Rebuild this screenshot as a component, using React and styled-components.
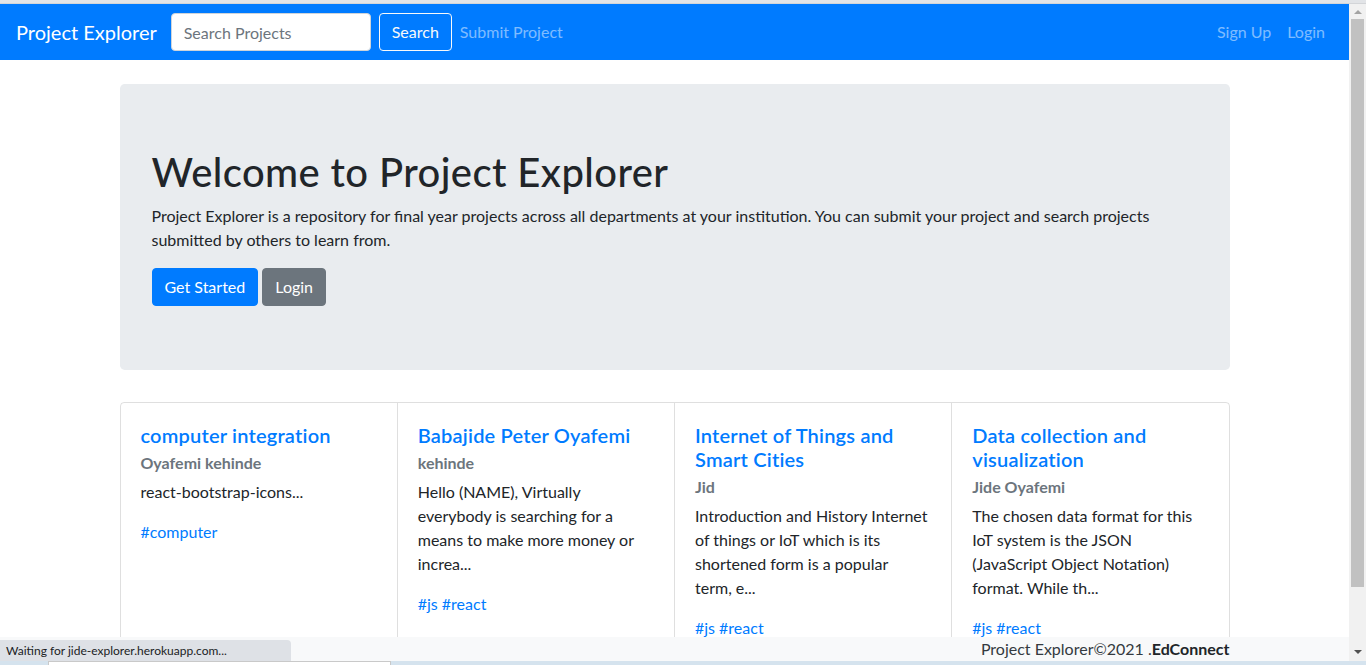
import React from "react";
import styled, { createGlobalStyle } from "styled-components";

const projects = [
  {
    title: "computer integration",
    author: "Oyafemi kehinde",
    abstract: "react-bootstrap-icons...",
    tags: ["computer"]
  },
  {
    title: "Babajide Peter Oyafemi",
    author: "kehinde",
    abstract:
      "Hello (NAME), Virtually everybody is searching for a means to make more money or increa...",
    tags: ["js", "react"]
  },
  {
    title: "Internet of Things and Smart Cities",
    author: "Jid",
    abstract:
      "Introduction and History Internet of things or IoT which is its shortened form is a popular term,\u00a0e...",
    tags: ["js", "react"]
  },
  {
    title: "Data collection and visualization",
    author: "Jide Oyafemi",
    abstract:
      "The chosen data format for this IoT system is the JSON (JavaScript Object Notation) format. While th...",
    tags: ["js", "react"]
  }
];

const App = () => (
  <>
    <GlobalStyle />
    <Frame>
      <TopStrip />
      <Middle>
        <Viewport>
          <Navbar>
            <Brand href="#">Project Explorer</Brand>
            <SearchForm>
              <SearchInput placeholder="Search Projects" />
              <OutlineButton type="button">Search</OutlineButton>
            </SearchForm>
            <NavLink href="#">Submit Project</NavLink>
            <NavRight>
              <NavLink href="#">Sign Up</NavLink>
              <NavLink href="#">Login</NavLink>
            </NavRight>
          </Navbar>

          <Container>
            <Jumbotron>
              <Heading>Welcome to Project Explorer</Heading>
              <Lead>
                Project Explorer is a repository for final year projects across
                all departments at your institution. You can submit your project
                and search projects submitted by others to learn from.
              </Lead>
              <ButtonRow>
                <Button variant="primary">Get Started</Button>
                <Button variant="secondary">Login</Button>
              </ButtonRow>
            </Jumbotron>

            <CardGroup>
              {projects.map(p => (
                <Card key={p.title}>
                  <CardTitle href="#">{p.title}</CardTitle>
                  <CardSubtitle>{p.author}</CardSubtitle>
                  <CardText>{p.abstract}</CardText>
                  <Tags>
                    {p.tags.map(t => (
                      <Tag key={t} href="#">#{t}</Tag>
                    ))}
                  </Tags>
                </Card>
              ))}
            </CardGroup>
          </Container>

          <Footer>
            <FooterInner>
              Project Explorer©2021 .<b>EdConnect</b>
            </FooterInner>
          </Footer>
          <StatusBar>Waiting for jide-explorer.herokuapp.com...</StatusBar>
        </Viewport>
        <Scrollbar>
          <ArrowUp />
          <Thumb />
          <ArrowDown />
        </Scrollbar>
      </Middle>
      <BottomStrip>
        <TaskSlot />
      </BottomStrip>
    </Frame>
  </>
);

export default App;

const GlobalStyle = createGlobalStyle`
  html, body {
    margin: 0;
    height: 100%;
    overflow: hidden;
  }
  body {
    font-family: Lato, "Liberation Sans", sans-serif;
    font-size: 16px;
    line-height: 1.5;
    color: #212529;
  }
  * { box-sizing: border-box; }
`;

const Frame = styled.div`
  display: flex;
  flex-direction: column;
  height: 100vh;
`;

const TopStrip = styled.div`
  height: 4px;
  background: #e2e4e7;
  border-bottom: 1px solid #d3d5d8;
`;

const Middle = styled.div`
  flex: 1;
  display: flex;
  min-height: 0;
`;

const Viewport = styled.div`
  flex: 1;
  position: relative;
  overflow: hidden;
  background: #fff;
`;

const Navbar = styled.nav`
  display: flex;
  align-items: center;
  height: 56px;
  padding: 8px 16px;
  background: #007bff;
`;

const Brand = styled.a`
  font-size: 20px;
  line-height: 30px;
  color: #fff;
  text-decoration: none;
  margin-right: 14px;
  white-space: nowrap;
`;

const SearchForm = styled.form`
  display: flex;
  align-items: center;
  margin: 0;
`;

const SearchInput = styled.input`
  width: 200px;
  height: 38px;
  padding: 6px 12px;
  margin-right: 8px;
  font: inherit;
  color: #495057;
  background: #fff;
  border: 1px solid #ced4da;
  border-radius: 4px;
  &::placeholder {
    color: #6c757d;
  }
`;

const OutlineButton = styled.button`
  height: 38px;
  padding: 6px 12px;
  font: inherit;
  color: #f8f9fa;
  background: transparent;
  border: 1px solid #f8f9fa;
  border-radius: 4px;
`;

const NavLink = styled.a`
  padding: 8px;
  color: rgba(255, 255, 255, 0.5);
  text-decoration: none;
  white-space: nowrap;
`;

const NavRight = styled.div`
  display: flex;
  margin-left: auto;
`;

const Container = styled.div`
  max-width: 1140px;
  margin: 0 auto;
  padding: 0 15px;
`;

const Jumbotron = styled.div`
  margin-top: 24px;
  margin-bottom: 32px;
  padding: 64px 32px;
  background: #e9ecef;
  border-radius: 4.8px;
`;

const Heading = styled.h1`
  margin: 0 0 8px;
  font-size: 40px;
  font-weight: 500;
  line-height: 1.2;
  letter-spacing: 0.4px;
`;

const Lead = styled.p`
  margin: 0 0 16px;
`;

const ButtonRow = styled.div`
  display: flex;
  gap: 4px;
`;

const Button = styled.button`
  padding: 6px 12px;
  font: inherit;
  color: #fff;
  background: ${p => (p.variant === "primary" ? "#007bff" : "#6c757d")};
  border: 1px solid ${p => (p.variant === "primary" ? "#007bff" : "#6c757d")};
  border-radius: 4px;
`;

const CardGroup = styled.div`
  display: flex;
  border: 1px solid rgba(0, 0, 0, 0.125);
  border-radius: 4px;
  min-height: 400px;
`;

const Card = styled.div`
  flex: 1;
  min-width: 0;
  display: flex;
  flex-direction: column;
  padding: 20px;
  & + & {
    border-left: 1px solid rgba(0, 0, 0, 0.125);
  }
`;

const CardTitle = styled.a`
  display: block;
  margin-bottom: 12px;
  font-size: 20px;
  font-weight: 600;
  line-height: 1.2;
  letter-spacing: 0.2px;
  color: #007bff;
  text-decoration: none;
`;

const CardSubtitle = styled.h6`
  margin: -6px 0 8px;
  font-size: 16px;
  font-weight: 700;
  line-height: 1.2;
  color: #6c757d;
`;

const CardText = styled.p`
  margin: 0 0 16px;
`;

const Tags = styled.div`
  display: flex;
  gap: 4px;
`;

const Tag = styled.a`
  color: #007bff;
  text-decoration: none;
`;

const Footer = styled.footer`
  position: absolute;
  left: 0;
  right: 0;
  bottom: 0;
  height: 24px;
  background: #f8f9fa;
`;

const FooterInner = styled(Container)`
  text-align: right;
  line-height: 24px;
  color: #343a40;
  b {
    color: #212529;
  }
`;

const StatusBar = styled.div`
  position: absolute;
  left: 0;
  bottom: 0;
  width: 291px;
  height: 21px;
  padding: 0 6px;
  font-size: 12px;
  line-height: 21px;
  color: #202124;
  background: #dee1e6;
  border-top-right-radius: 4px;
`;

const Scrollbar = styled.div`
  width: 17px;
  display: flex;
  flex-direction: column;
  align-items: center;
  background: #f1f1f1;
`;

const ArrowUp = styled.div`
  margin: 6px 0 5px;
  width: 0;
  height: 0;
  border-left: 4px solid transparent;
  border-right: 4px solid transparent;
  border-bottom: 4px solid #a3a3a3;
`;

const Thumb = styled.div`
  width: 13px;
  height: 568px;
  background: #c1c1c1;
`;

const ArrowDown = styled.div`
  margin-top: auto;
  margin-bottom: 7px;
  width: 0;
  height: 0;
  border-left: 4px solid transparent;
  border-right: 4px solid transparent;
  border-top: 4px solid #505050;
`;

const BottomStrip = styled.div`
  height: 4px;
  display: flex;
  background: #d5e3ee;
`;

const TaskSlot = styled.div`
  width: 343px;
  margin-left: 48px;
  background: #fff;
  border: 1px solid #c9c9c9;
  border-bottom: none;
`;
